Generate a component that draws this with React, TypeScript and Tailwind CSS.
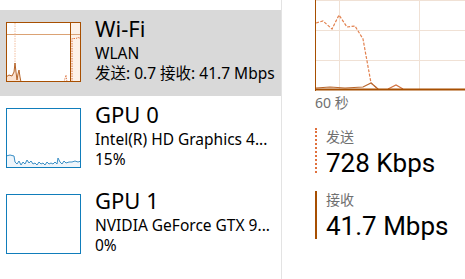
import React from 'react'

const font = { fontFamily: '"Noto Sans", "Noto Sans CJK SC", sans-serif' }
const numFont = { fontFamily: 'Roboto, "Noto Sans", sans-serif' }

function WifiThumb() {
  return (
    <svg width="75" height="60" viewBox="0 0 75 60" className="block">
      <rect x="0" y="0" width="75" height="60" fill="#ffffff" />
      <rect x="64" y="0" width="11" height="60" fill="#fdf1e7" />
      <line x1="0" y1="12.5" x2="75" y2="12.5" stroke="#dba274" strokeWidth="1" />
      <line x1="9" y1="1" x2="9" y2="60" stroke="#f2bfa0" strokeWidth="1" strokeDasharray="1.5 1" />
      <polygon points="0,60 0,55 3,53 6,54 8,50 9,41 10,50 11,58 12,52 13,48 14,55 15,60" fill="#fbe3d2" />
      <polyline points="0,55 3,53 6,54 8,50 9,41 10,50 11,58 12,52 13,48 14,55 15,60" fill="none" stroke="#b5642a" strokeWidth="1" />
      <polyline points="58,60 60,53 61,60" fill="none" stroke="#e2875a" strokeWidth="1" strokeDasharray="1.5 1" />
      <polyline points="66,60 66,16.5 70,16.5 72,15.5 75,16.5" fill="none" stroke="#e0733d" strokeWidth="1" strokeDasharray="1.5 1" />
      <line x1="64.5" y1="0" x2="64.5" y2="60" stroke="#a74f01" strokeWidth="1" />
      <rect x="0.5" y="0.5" width="74" height="59" fill="none" stroke="#a74f01" strokeWidth="1" />
    </svg>
  )
}

function GpuThumb({ line }: { line?: boolean }) {
  const pts =
    '0,48 4,47 8,48 9,54 11,56 13,53 15,57 17,54 19,56 21,52 23,55 25,53 27,56 29,55 31,57 33,54 35,56 37,55 39,57 41,54 43,56 45,55 47,56 49,54 51,56 52,50 54,54 56,56 58,53 60,55 63,54 66,54 69,53 72,54 75,53'
  return (
    <svg width="75" height="60" viewBox="0 0 75 60" className="block">
      <rect x="0" y="0" width="75" height="60" fill="#ffffff" />
      {line && (
        <>
          <polygon points={`0,60 ${pts} 75,60`} fill="#eef5fb" />
          <polyline points={pts} fill="none" stroke="#3a8fc6" strokeWidth="1" />
        </>
      )}
      <rect x="0.5" y="0.5" width="74" height="59" fill="none" stroke="#117dbb" strokeWidth="1" />
    </svg>
  )
}

function BigGraph() {
  return (
    <svg width="150" height="91" viewBox="0 0 150 91" className="block">
      <rect x="0" y="0" width="150" height="91" fill="#ffffff" />
      <line x1="0" y1="0.5" x2="150" y2="0.5" stroke="#f0e1d5" />
      <line x1="0" y1="30.5" x2="150" y2="30.5" stroke="#f0e1d5" />
      <line x1="0" y1="60.5" x2="150" y2="60.5" stroke="#f0e1d5" />
      <line x1="24.5" y1="0" x2="24.5" y2="90" stroke="#f0e1d5" />
      <line x1="104.5" y1="0" x2="104.5" y2="90" stroke="#f0e1d5" />
      <polyline
        points="1,23 8,21 17,29 24,15 32,27 40,26 48,39 56,83 63,89"
        fill="none"
        stroke="#e2814f"
        strokeWidth="1.2"
        strokeDasharray="3 1.5"
      />
      <polyline points="73,89 81,85 88,89" fill="none" stroke="#d37240" strokeWidth="1.2" />
      <polyline points="1,88 15,87 30,88 48,87 56,83 63,89" fill="none" stroke="#b9682f" strokeWidth="1.2" />
      <line x1="0.5" y1="0" x2="0.5" y2="91" stroke="#a74f01" strokeWidth="1" />
      <line x1="0" y1="89.5" x2="150" y2="89.5" stroke="#a74f01" strokeWidth="2" />
    </svg>
  )
}

type Item = {
  title: string
  lines: string[]
  thumb: React.ReactNode
  selected?: boolean
}

const items: Item[] = [
  { title: 'Wi-Fi', lines: ['WLAN', '发送: 0.7 接收: 41.7 Mbps'], thumb: <WifiThumb />, selected: true },
  { title: 'GPU 0', lines: ['Intel(R) HD Graphics 4...', '15%'], thumb: <GpuThumb line /> },
  { title: 'GPU 1', lines: ['NVIDIA GeForce GTX 9...', '0%'], thumb: <GpuThumb /> },
]

export default function App() {
  return (
    <div className="flex w-[465px] h-[279px] overflow-hidden bg-white text-black" style={font}>
      <div className="w-[282px] shrink-0 border-r border-[#e3e3e3] pt-[10px]">
        {items.map((it) => (
          <div
            key={it.title}
            className={`flex items-start h-[86px] pl-[6px] ${it.selected ? 'bg-[#d9d9d9]' : ''}`}
          >
            <div className="shrink-0 mt-[12px]">{it.thumb}</div>
            <div className="ml-[14px] pt-[4px] whitespace-nowrap">
              <div className="text-[22px] leading-[28px]">{it.title}</div>
              <div className="text-[15.5px] leading-[20px] mt-[1px]">{it.lines[0]}</div>
              <div className="text-[15.5px] leading-[20px]">{it.lines[1]}</div>
            </div>
          </div>
        ))}
      </div>
      <div className="flex-1 pl-[33px] overflow-hidden">
        <BigGraph />
        <div className="mt-[3px] text-[14px] leading-[18px] text-[#6f6f6f]">60 秒</div>
        <div className="mt-[16px] flex flex-col gap-[18px]">
          <div className="border-l-2 border-dotted border-[#e0703c] pl-[9px] h-[45px]">
            <div className="text-[14px] leading-[18px] text-[#707070]">发送</div>
            <div className="mt-[2px] text-[26px] leading-[30px] whitespace-nowrap" style={numFont}>
              728 Kbps
            </div>
          </div>
          <div className="border-l-2 border-[#a74f01] pl-[9px] h-[48px]">
            <div className="text-[14px] leading-[18px] text-[#707070]">接收</div>
            <div className="mt-[2px] text-[26px] leading-[30px] whitespace-nowrap" style={numFont}>
              41.7 Mbps
            </div>
          </div>
        </div>
      </div>
    </div>
  )
}
